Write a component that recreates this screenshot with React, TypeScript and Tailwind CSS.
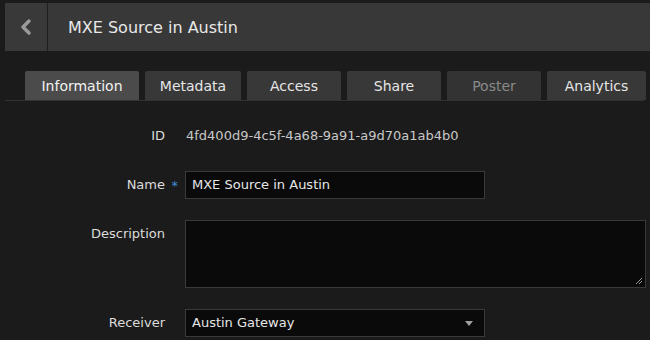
import { ChevronLeft } from 'lucide-react'

const tabs: Array<{ label: string; width: string; active?: boolean; disabled?: boolean }> = [
  { label: 'Information', width: 'w-[114px]', active: true },
  { label: 'Metadata', width: 'w-[96px]' },
  { label: 'Access', width: 'w-[94px]' },
  { label: 'Share', width: 'w-[94px]' },
  { label: 'Poster', width: 'w-[94px]', disabled: true },
  { label: 'Analytics', width: 'w-[99px]' },
]

function Label({ text, required }: { text: string; required?: boolean }) {
  return (
    <div className="w-[160px] h-[28px] flex items-center justify-end shrink-0">
      <span className="relative text-[#dcdcdc]">
        {text}
        {required && <span className="absolute -right-[13px] top-[1px] text-[#3b8fd8]">*</span>}
      </span>
    </div>
  )
}

export default function App() {
  return (
    <div
      className="w-[650px] h-[340px] overflow-hidden bg-[#1b1b1b] pt-[3px]"
      style={{ fontFamily: 'Tahoma, "DejaVu Sans", sans-serif' }}
    >
      {/* Header */}
      <div className="ml-[5px] h-[48px] flex">
        <button className="w-[42px] bg-[#393939] flex items-center justify-center text-[#9a9a9a]">
          <ChevronLeft className="w-[24px] h-[24px]" strokeWidth={3.5} />
        </button>
        <div className="w-px bg-[#1e1e1e]" />
        <div className="flex-1 bg-[#383838] flex items-center pl-[20px] pt-[1px] text-[16px] text-[#e8e8e8]">
          MXE Source in Austin
        </div>
      </div>

      {/* Tabs */}
      <div className="ml-[5px] mr-[6px] mt-[20px] border-b border-[#333] flex gap-[6px] pl-[20px]">
        {tabs.map((tab) => (
          <div
            key={tab.label}
            className={`${tab.width} shrink-0 h-[29px] pt-[2px] rounded-t-[2px] flex items-center justify-center text-[14px] ${
              tab.active
                ? 'bg-[#4b4b4b] text-[#f2f2f2]'
                : tab.disabled
                  ? 'bg-[#333] text-[#8a8a8a]'
                  : 'bg-[#383838] text-[#e6e6e6]'
            }`}
          >
            {tab.label}
          </div>
        ))}
      </div>

      {/* Form */}
      <div className="ml-[5px] mt-[21px] flex flex-col gap-[21px] text-[13px]">
        <div className="flex items-center">
          <Label text="ID" />
          <span className="ml-[21px] text-[#c8c8c8]">4fd400d9-4c5f-4a68-9a91-a9d70a1ab4b0</span>
        </div>

        <div className="flex">
          <Label text="Name" required />
          <div className="ml-[20px] w-[300px] h-[28px] border border-[#3a3a3a] bg-[#0a0a0a] flex items-center px-[6px] text-[#e6e6e6]">
            MXE Source in Austin
          </div>
        </div>

        <div className="flex">
          <Label text="Description" />
          <div className="ml-[20px] w-[461px] h-[68px] border border-[#3a3a3a] bg-[#0a0a0a] relative">
            <svg className="absolute right-[2px] bottom-[2px]" width="8" height="8" viewBox="0 0 8 8">
              <path d="M1 7 L7 1 M4 7 L7 4" stroke="#9a9a9a" strokeWidth="1" />
            </svg>
          </div>
        </div>

        <div className="flex">
          <Label text="Receiver" />
          <div className="ml-[20px] w-[300px] h-[28px] border border-[#3a3a3a] bg-[#0a0a0a] flex items-center justify-between px-[6px] text-[#e6e6e6]">
            <span>Austin Gateway</span>
            <svg width="8" height="5" viewBox="0 0 8 5" className="mr-[5px]">
              <path d="M0 0 H8 L4 5 Z" fill="#a0a0a0" />
            </svg>
          </div>
        </div>
      </div>
    </div>
  )
}
